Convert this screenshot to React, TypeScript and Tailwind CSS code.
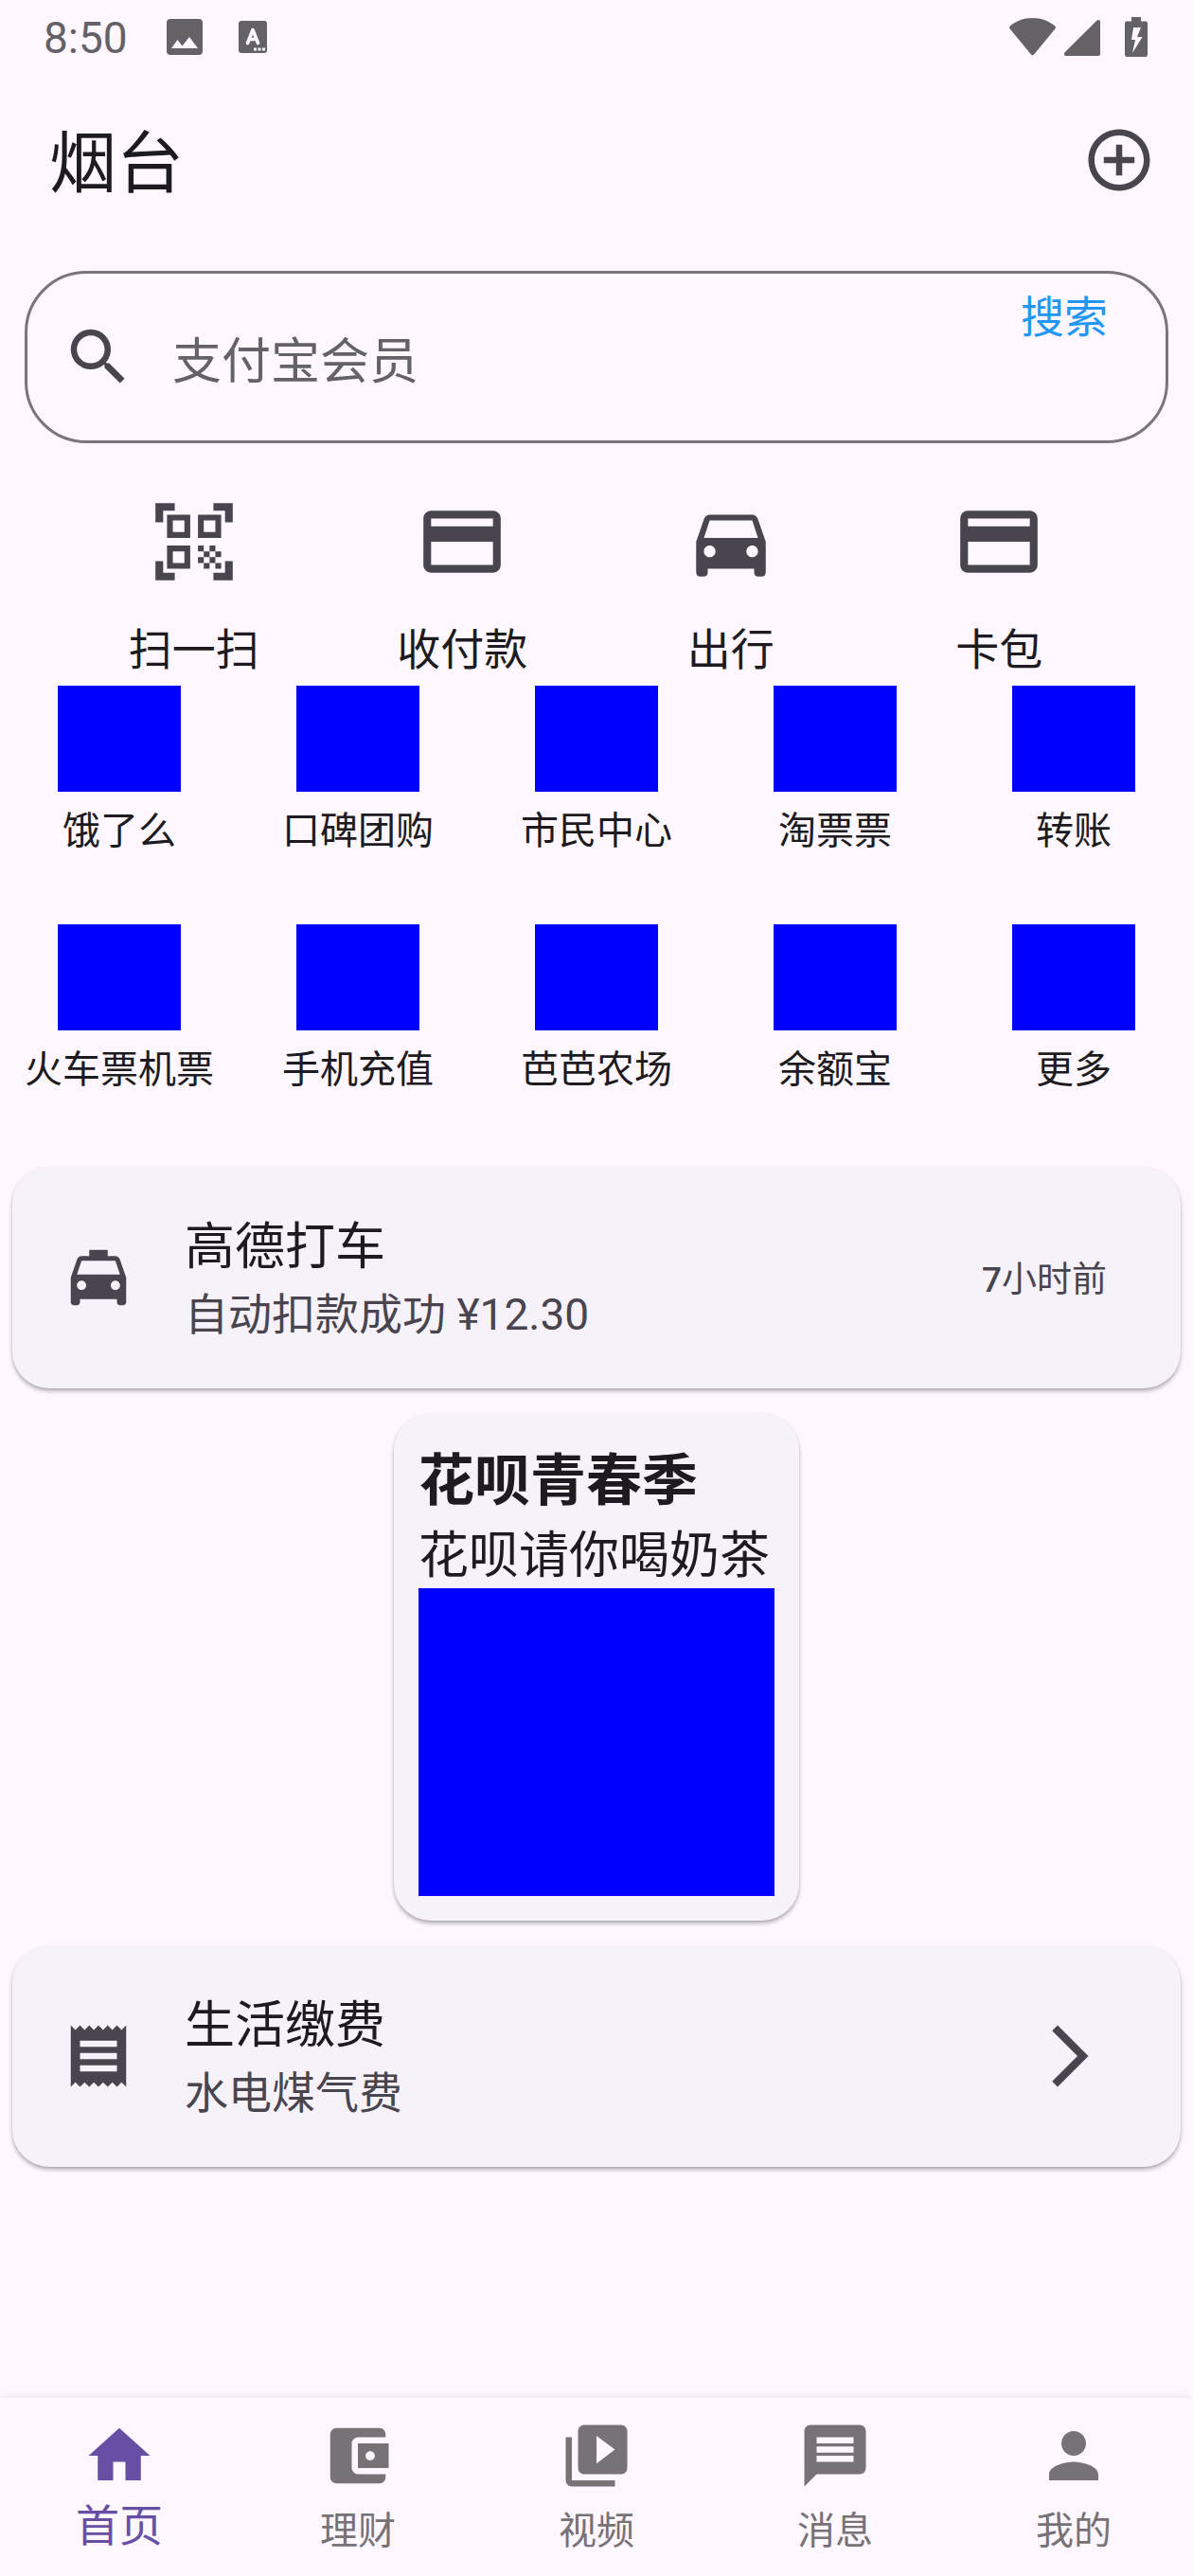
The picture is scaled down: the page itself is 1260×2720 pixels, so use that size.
import React from 'react';
import {
  MdAccountBalanceWallet,
  MdAddCircleOutline,
  MdArrowForwardIos,
  MdCreditCard,
  MdDirectionsCar,
  MdHome,
  MdLocalTaxi,
  MdMessage,
  MdPerson,
  MdQrCodeScanner,
  MdReceipt,
  MdSearch,
  MdVideoLibrary,
} from 'react-icons/md';
import type { IconType } from 'react-icons';

const quickActions: { label: string; icon: IconType }[] = [
  { label: '扫一扫', icon: MdQrCodeScanner },
  { label: '收付款', icon: MdCreditCard },
  { label: '出行', icon: MdDirectionsCar },
  { label: '卡包', icon: MdCreditCard },
];

const services = [
  '饿了么',
  '口碑团购',
  '市民中心',
  '淘票票',
  '转账',
  '火车票机票',
  '手机充值',
  '芭芭农场',
  '余额宝',
  '更多',
];

const tabs: { label: string; icon: IconType; active?: boolean }[] = [
  { label: '首页', icon: MdHome, active: true },
  { label: '理财', icon: MdAccountBalanceWallet },
  { label: '视频', icon: MdVideoLibrary },
  { label: '消息', icon: MdMessage },
  { label: '我的', icon: MdPerson },
];

function StatusBar() {
  return (
    <div className="flex h-[78px] items-center justify-between pr-12 pl-[46px] text-[#656267]">
      <div className="flex items-center">
        <span className="pt-[2px] text-[46px] leading-[54px]">8:50</span>
        <svg className="ml-[41px] h-[38px] w-[38px]" viewBox="0 0 38 38" aria-hidden="true">
          <path
            fill="currentColor"
            fillRule="evenodd"
            d="M4 0h30a4 4 0 0 1 4 4v30a4 4 0 0 1-4 4H4a4 4 0 0 1-4-4V4a4 4 0 0 1 4-4zM5 31h28L24 19l-7.500 9.500L11.500 22z"
          />
        </svg>
        <svg className="ml-[38px] h-[34px] w-[30px]" viewBox="0 0 30 34" aria-hidden="true">
          <rect width="30" height="34" rx="3" fill="currentColor" />
          <path
            d="M9.500 23.500 15 9.500l5.500 14M11.500 19.500h7"
            fill="none"
            stroke="#fef7ff"
            strokeWidth="3.600"
            strokeLinecap="round"
            strokeLinejoin="round"
          />
          <path fill="#fef7ff" d="M16 28.500h3v3h-3zM20.500 28.500h3v3h-3zM25 28.500h3v3h-3z" />
        </svg>
      </div>
      <div className="flex items-center">
        <svg className="h-[42px] w-[49px]" viewBox="0 0 49 42" aria-hidden="true">
          <path
            fill="currentColor"
            d="M24.500 1C15 1 7 4.500 1 9.200c-1 .9-1.200 2-.5 3.100L22.900 39.500c.9 1.100 2.300 1.100 3.200 0L48.500 12.300c.7-1.100.5-2.200-.5-3.100C42 4.500 34 1 24.500 1z"
          />
        </svg>
        <svg className="ml-[9px] h-[42px] w-[38px]" viewBox="0 0 38 42" aria-hidden="true">
          <path fill="currentColor" d="M38 5v34a2 2 0 0 1-2 2H2c-2 0-2.700-2.400-1.400-3.800L34.600 3.600C36 2.300 38 3 38 5z" />
        </svg>
        <svg className="ml-[26px] h-[42px] w-6" viewBox="0 0 24 42" aria-hidden="true">
          <path
            fill="currentColor"
            fillRule="evenodd"
            d="M7 0h10v4.500h5a2 2 0 0 1 2 2V40a2 2 0 0 1-2 2H2a2 2 0 0 1-2-2V6.500a2 2 0 0 1 2-2h5zM9 11 7 24h4L8 38l10.500-17H13l4-10z"
          />
        </svg>
      </div>
    </div>
  );
}

function InfoCard({
  icon: Icon,
  title,
  subtitle,
  trailing,
}: {
  icon: IconType;
  title: string;
  subtitle: string;
  trailing: React.ReactNode;
}) {
  return (
    <section className="flex min-h-[234px] items-center rounded-[39px] bg-[#f7f2fa] pr-[78px] pl-[52px] shadow-[0_3px_4px_rgba(0,0,0,0.28),0_1px_2px_rgba(0,0,0,0.08)]">
      <Icon className="size-[78px] shrink-0 text-[#49454f]" aria-hidden="true" />
      <div className="ml-[52px] flex-1">
        <h2 className="text-[53px] leading-[78px]">{title}</h2>
        <p className="text-[46px] leading-[64px] text-[#49454f]">{subtitle}</p>
      </div>
      <div className="text-[37px] leading-[52px] text-[#49454f]">{trailing}</div>
    </section>
  );
}

export default function App() {
  return (
    <div className="flex min-h-screen flex-col bg-[#fef7ff] font-[Roboto,'Noto_Sans_CJK_SC',sans-serif] text-[#1d1b20]">
      <StatusBar />

      <header className="flex h-[182px] items-center justify-between pr-[39px] pl-[52px]">
        <h1 className="pt-2 text-[71px] leading-[92px]">烟台</h1>
        <button type="button" aria-label="添加" className="text-[#49454f]">
          <MdAddCircleOutline className="size-[78px]" />
        </button>
      </header>

      <main className="flex flex-1 flex-col">
        <form
          className="mx-[26px] mt-[26px] flex h-[182px] items-center rounded-[65px] border-[3px] border-[#79747e] pr-[61px] pl-9"
          onSubmit={(event) => event.preventDefault()}
        >
          <label htmlFor="search" className="shrink-0 text-[#49454f]" aria-label="搜索内容">
            <MdSearch className="size-[78px]" />
          </label>
          <input
            id="search"
            type="text"
            placeholder="支付宝会员"
            className="ml-[39px] h-[88px] min-w-0 flex-1 bg-transparent pt-[10px] text-[52px] outline-none placeholder:text-[#656267]"
          />
          <button type="submit" className="mt-[14px] self-start text-[46px] leading-[65px] text-[#2196f3]">
            搜索
          </button>
        </form>

        <nav aria-label="快捷功能" className="mt-[55px] grid grid-cols-4 px-[63px]">
          {quickActions.map(({ label, icon: Icon }) => (
            <button key={label} type="button" className="flex flex-col items-center">
              <Icon className="size-[98px] text-[#49454f]" aria-hidden="true" />
              <span className="mt-[33px] text-[46px] leading-[65px]">{label}</span>
            </button>
          ))}
        </nav>

        <section aria-label="服务" className="mt-[5px] grid grid-cols-5">
          {services.map((label) => (
            <button key={label} type="button" className="flex h-[252px] flex-col items-center">
              <span className="h-28 w-[130px] bg-[#0000ff]" />
              <span className="mt-[14px] text-[40px] leading-[56px] whitespace-nowrap">{label}</span>
            </button>
          ))}
        </section>

        <div className="mx-[13px] mt-1 flex flex-col gap-[26px]">
          <InfoCard
            icon={MdLocalTaxi}
            title="高德打车"
            subtitle="自动扣款成功 ¥12.30"
            trailing={
              <p className="pt-[6px]">
                <span className="font-medium">7</span>小时前
              </p>
            }
          />

          <section className="flex w-[428px] flex-col self-center rounded-[39px] bg-[#f7f2fa] px-[26px] pt-[30px] pb-[26px] shadow-[0_3px_4px_rgba(0,0,0,0.28),0_1px_2px_rgba(0,0,0,0.08)]">
            <h2 className="text-[59px] leading-[84px] font-bold whitespace-nowrap">花呗青春季</h2>
            <p className="h-[71px] text-[53px] leading-[75px] whitespace-nowrap">花呗请你喝奶茶</p>
            <div className="h-[325px] bg-[#0000ff]" />
          </section>

          <InfoCard
            icon={MdReceipt}
            title="生活缴费"
            subtitle="水电煤气费"
            trailing={
              <button type="button" aria-label="查看生活缴费" className="block">
                <MdArrowForwardIos className="size-[78px]" />
              </button>
            }
          />
        </div>
      </main>

      <footer className="h-[188px] bg-[#fef7ff] shadow-[0_-1px_6px_rgba(0,0,0,0.09)]">
        <nav aria-label="主导航" className="grid h-full grid-cols-5 pt-[22px]">
          {tabs.map(({ label, icon: Icon, active }) => (
            <a
              key={label}
              href="#"
              aria-current={active ? 'page' : undefined}
              className={
                active
                  ? 'flex flex-col items-center text-[46px] text-[#6750a4]'
                  : 'flex flex-col items-center text-[40px] text-[#777276]'
              }
            >
              <Icon className="size-[78px]" aria-hidden="true" />
              <span className={active ? 'mt-[3px] leading-[65px]' : 'mt-[13px] leading-[56px]'}>{label}</span>
            </a>
          ))}
        </nav>
      </footer>
    </div>
  );
}
